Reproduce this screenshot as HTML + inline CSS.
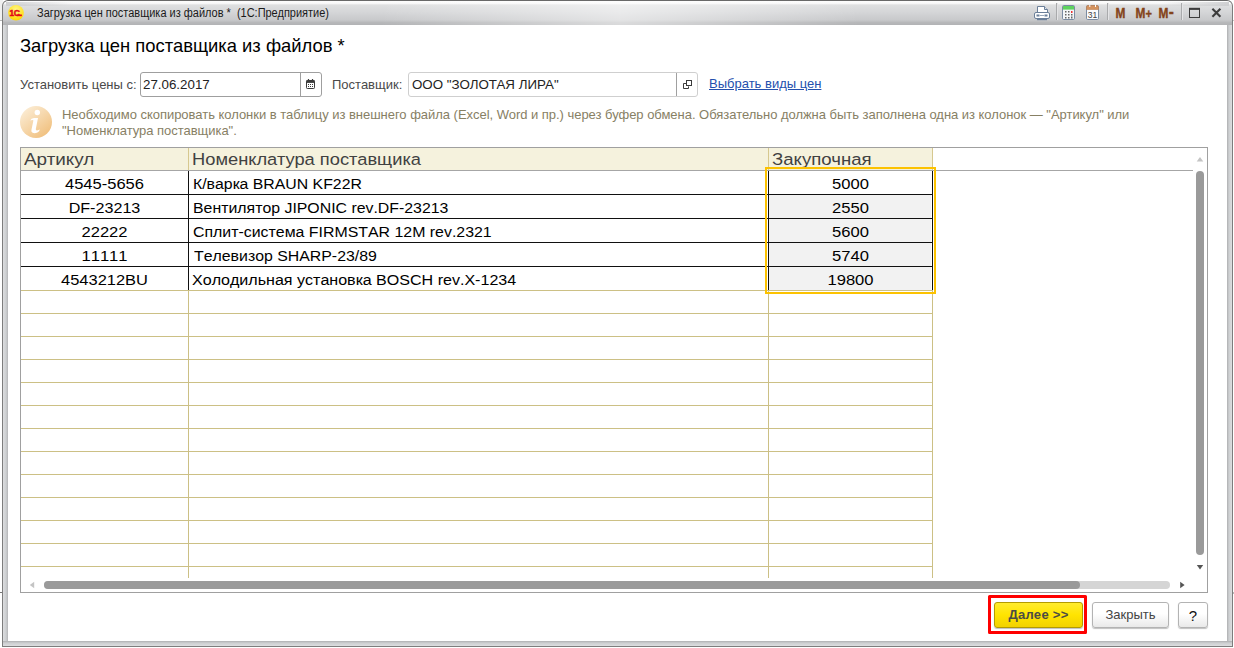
<!DOCTYPE html>
<html lang="ru">
<head>
<meta charset="utf-8">
<title>Загрузка цен поставщика из файлов</title>
<style>
html,body{margin:0;padding:0;background:#fff;}
body{width:1234px;height:648px;position:relative;overflow:hidden;font-family:"Liberation Sans",sans-serif;}
.abs{position:absolute;}
#bgl1{left:0;top:0;width:3px;height:20px;background:#f0f0f0;}
#bgl2{left:0;top:20px;width:3px;height:1px;background:#b4b4b4;}
#bgl3{left:0;top:592px;width:3px;height:1px;background:#777;}
#bgr1{left:1233px;top:20px;width:1px;height:1px;background:#c8c8c8;}
#bgr2{left:1233px;top:592px;width:1px;height:2px;background:#bbb;}
#win{left:2px;top:0;width:1231px;height:647px;box-sizing:border-box;border:1px solid #7d7d7d;border-top-color:#696969;border-radius:6px 6px 0 0;
 background:linear-gradient(to bottom,#fdfdfd 0px,#f9f9f9 2.4px,#e8e8e9 3.4px,#dedfe0 4.4px,#d5d6d8 11px,#c8c9cb 19px,#b7b8ba 21.5px,#b2b3b5 24px,#cbccce 25px);}
#winhl{left:380px;top:1px;width:480px;height:24px;background:linear-gradient(to right,rgba(255,255,255,0),rgba(255,255,255,.5) 50%,rgba(255,255,255,0));}
#wfl{left:6px;top:2px;width:67px;height:4px;background:linear-gradient(to right,rgba(205,206,208,.95),rgba(205,206,208,0));}
#wfr{left:1162px;top:2px;width:67px;height:4px;background:linear-gradient(to left,rgba(205,206,208,.95),rgba(205,206,208,0));}
#winl{left:3px;top:25px;width:5px;height:621px;background:linear-gradient(to right,#dcdddf,#cdcfd1 60%,#b4b5b7);}
#winr{left:1227px;top:25px;width:5px;height:621px;background:linear-gradient(to right,#aeafb1,#cdcfd1 40%,#dcdddf);}
#winb{left:3px;top:641px;width:1229px;height:5px;background:linear-gradient(to bottom,#aeafb1,#cdcfd1 40%,#dcdddf);}
#content{left:8px;top:25px;width:1219px;height:616px;background:#fff;}
#ttext{left:36.5px;top:6px;font-size:12.5px;line-height:15px;color:#1a1a1a;white-space:pre;transform-origin:0 0;transform:scaleX(0.878);}
#h1{left:20px;top:36px;font-size:18.4px;line-height:20px;color:#000;white-space:pre;}
.lbl{font-size:13px;line-height:16px;color:#4a4a4a;white-space:pre;}
.inp{box-sizing:border-box;height:25px;border:1px solid #a8a8a8;border-radius:3px;background:#fff;}
.inp .t{position:absolute;left:2px;top:4px;font-size:13.33px;line-height:16px;color:#222;white-space:pre;}
.inp .sep{position:absolute;top:0;bottom:0;width:1px;background:#b8b8b8;}
#info{left:62px;top:107px;font-size:13px;line-height:16px;color:#878064;white-space:pre;letter-spacing:-0.03px;}
#frame{left:20px;top:147px;width:1188px;height:446px;box-sizing:border-box;border:1px solid #a0a0a0;background:#fff;}
.hc{position:absolute;top:148px;height:22px;background:#f5f2dd;box-sizing:border-box;border-right:1px solid #d6c88f;}
.ht{position:absolute;top:150px;font-size:16.8px;line-height:20px;color:#414141;white-space:pre;transform-origin:0 50%;transform:scaleX(1.09);}
.cell{position:absolute;font-size:14px;line-height:18px;color:#000;white-space:pre;font-kerning:none;transform-origin:0 50%;transform:scaleX(1.14);}
.ctr{text-align:center;transform-origin:50% 50%;transform:scaleX(1.185);}
.txt{transform:scaleX(1.143);}
.hl{position:absolute;height:1px;}
.vl{position:absolute;width:1px;}
.btn{box-sizing:border-box;height:26px;border:1px solid #b3b3b3;border-radius:3px;background:linear-gradient(to bottom,#fff 0%,#fff 45%,#e9e9e9 100%);box-shadow:0 1px 1px rgba(0,0,0,.25);font-size:13px;line-height:24px;text-align:center;color:#444;white-space:pre;}
#ht1{transform:scaleX(1.125);}
#ht3{transform:scaleX(1.108);}
</style>
</head>
<body>
<div class="abs" id="bgl1"></div><div class="abs" id="bgl2"></div><div class="abs" id="bgl3"></div>
<div class="abs" id="bgr1"></div><div class="abs" id="bgr2"></div>
<div class="abs" id="win"></div><div class="abs" id="winhl"></div><div class="abs" id="wfl"></div><div class="abs" id="wfr"></div>
<div class="abs" id="winl"></div><div class="abs" id="winr"></div><div class="abs" id="winb"></div>
<div class="abs" id="content"></div>

<!-- title bar -->
<svg class="abs" style="left:8px;top:4px" width="18" height="18" viewBox="0 0 18 18">
 <defs><radialGradient id="g1c" cx="50%" cy="30%" r="70%"><stop offset="0" stop-color="#fff58a"/><stop offset="0.6" stop-color="#ffe633"/><stop offset="1" stop-color="#ffd400"/></radialGradient></defs>
 <circle cx="8" cy="8.8" r="7.8" fill="url(#g1c)"/>
 <text x="1.6" y="12.1" font-family="Liberation Sans, sans-serif" font-weight="bold" font-size="8.2" fill="#e20a17" stroke="#e20a17" stroke-width="0.5">1</text>
 <text x="5.7" y="12.1" font-family="Liberation Sans, sans-serif" font-weight="bold" font-size="8.6" fill="#e20a17" stroke="#e20a17" stroke-width="0.45">С</text>
 <rect x="9" y="10.5" width="4.9" height="1.7" fill="#e20a17"/>
</svg>
<div class="abs" id="ttext">Загрузка цен поставщика из файлов *  (1С:Предприятие)</div>

<!-- title bar icons -->
<svg class="abs" style="left:1030px;top:0" width="200" height="25" viewBox="1030 0 200 25">
 <!-- printer / preview -->
 <path d="M1037.5 13 V6.5 H1044.5 L1047.5 9.5 V13" fill="#fff" stroke="#6b7f99" stroke-width="1"/>
 <path d="M1044.5 6.5 V9.5 H1047.5" fill="#dfe6ee" stroke="#6b7f99" stroke-width="1"/>
 <rect x="1034.5" y="12.5" width="15" height="6" rx="1.5" fill="#fff" stroke="#6b7f99" stroke-width="1"/>
 <rect x="1036.5" y="14.5" width="3" height="2" fill="#6b7f99"/><rect x="1044.5" y="14.5" width="3" height="2" fill="#6b7f99"/>
 <rect x="1040" y="15" width="4" height="1" fill="#9aa9bb"/>
 <path d="M1037 19.5 H1047" stroke="#6b7f99" stroke-width="1.4"/>
 <!-- separators -->
 <rect x="1056" y="3" width="1" height="17" fill="#a9aaac"/><rect x="1057" y="3" width="1" height="17" fill="#e4e4e6"/>
 <rect x="1107" y="3" width="1" height="17" fill="#a9aaac"/><rect x="1108" y="3" width="1" height="17" fill="#e4e4e6"/>
 <rect x="1181" y="3" width="1" height="17" fill="#a9aaac"/><rect x="1182" y="3" width="1" height="17" fill="#e4e4e6"/>
 <!-- calculator -->
 <rect x="1062.5" y="5.5" width="12" height="14" rx="1.2" fill="#f4f6f8" stroke="#7b8ca3" stroke-width="1"/>
 <rect x="1063" y="6" width="11" height="3.6" fill="#5fd35f"/>
 <g fill="#666"><rect x="1065" y="11" width="1.5" height="1.5"/><rect x="1068" y="11" width="1.5" height="1.5"/>
 <rect x="1065" y="14" width="1.5" height="1.5"/><rect x="1068" y="14" width="1.5" height="1.5"/><rect x="1071" y="14" width="1.5" height="1.5"/>
 <rect x="1065" y="17" width="1.5" height="1.5"/><rect x="1068" y="17" width="1.5" height="1.5"/><rect x="1071" y="16.5" width="1.5" height="2"/></g>
 <rect x="1071" y="11" width="1.5" height="2" fill="#f03030"/>
 <!-- calendar -->
 <rect x="1086.5" y="5.5" width="12" height="14" rx="1.2" fill="#fbfbfc" stroke="#7b8ca3" stroke-width="1"/>
 <path d="M1086.5 9.5 V7 Q1086.5 5.5 1088 5.5 H1097 Q1098.5 5.5 1098.5 7 V9.5 Z" fill="#d4935f" stroke="#c08050" stroke-width="0.6"/>
 <rect x="1089.3" y="4.6" width="1" height="2.4" fill="#fff"/><rect x="1095" y="4.6" width="1" height="2.4" fill="#fff"/>
 <text x="1092.5" y="17.6" text-anchor="middle" font-family="Liberation Sans, sans-serif" font-size="8.6" fill="#444">31</text>
 <!-- M M+ M- -->
 <g font-family="Liberation Sans, sans-serif" font-weight="bold" font-size="14" fill="#84431a" stroke="#84431a" stroke-width="0.35">
  <text transform="translate(1115.4 18) scale(0.85 1)">M</text>
  <text transform="translate(1135.4 18) scale(0.85 1)">M<tspan dx="0.3" dy="-0.4" font-size="13">+</tspan></text>
  <text transform="translate(1158.4 18) scale(0.85 1)">M<tspan dx="0.6" dy="-1" font-size="17" textLength="6" lengthAdjust="spacingAndGlyphs">-</tspan></text>
 </g>
 <!-- maximize -->
 <rect x="1189.5" y="9" width="10" height="8.5" fill="none" stroke="#3c3c3c" stroke-width="1"/>
 <rect x="1189" y="7.8" width="11" height="2" fill="#3c3c3c"/>
 <!-- close -->
 <path d="M1212.4 8.8 L1220.4 16.8 M1220.4 8.8 L1212.4 16.8" stroke="#3c3c3c" stroke-width="2.1"/>
</svg>

<!-- header -->
<div class="abs" id="h1">Загрузка цен поставщика из файлов *</div>

<div class="abs lbl" style="left:20px;top:77px">Установить цены с:</div>
<div class="abs inp" style="left:140px;top:72px;width:182px;border-color:#9f9f9f"><span class="t">27.06.2017</span><span class="sep" style="left:159px;background:#9f9f9f"></span></div>
<div class="abs lbl" style="left:332px;top:77px">Поставщик:</div>
<div class="abs inp" style="left:408px;top:72px;width:290px;border-color:#cfcfcf"><span class="t" style="left:3px">ООО "ЗОЛОТАЯ ЛИРА"</span><span class="sep" style="left:267px;background:#a0a0a0"></span></div>
<div class="abs lbl" style="left:709px;top:76px;color:#2450ad;text-decoration:underline">Выбрать виды цен</div>

<svg class="abs" style="left:304px;top:77px" width="14" height="14" viewBox="304 77 14 14">
 <rect x="306.5" y="80.5" width="8" height="8" rx="0.8" fill="#fff" stroke="#3b3b3b" stroke-width="1"/>
 <rect x="306.5" y="80.3" width="8" height="2.6" fill="#3b3b3b"/>
 <rect x="307.9" y="79" width="1.2" height="2" fill="#3b3b3b"/><rect x="311.9" y="79" width="1.2" height="2" fill="#3b3b3b"/>
 <g fill="#3b3b3b"><rect x="308" y="84" width="1" height="1"/><rect x="310" y="84" width="1" height="1"/><rect x="312" y="84" width="1" height="1"/>
 <rect x="308" y="86" width="1" height="1"/><rect x="310" y="86" width="1" height="1"/><rect x="312" y="86" width="1" height="1"/></g>
</svg>
<svg class="abs" style="left:680px;top:77px" width="16" height="14" viewBox="680 77 16 14">
 <rect x="686.5" y="80.5" width="5" height="5" fill="none" stroke="#3b3b3b" stroke-width="1"/>
 <path d="M686 83.5 H683.5 V88.5 H688.5 V86.4" fill="none" stroke="#3b3b3b" stroke-width="1"/>
</svg>
<svg class="abs" style="left:20px;top:106px" width="32" height="32" viewBox="0 0 32 32">
 <defs><linearGradient id="gi" x1="0.15" y1="0.1" x2="0.85" y2="0.95"><stop offset="0" stop-color="#fbebd2"/><stop offset="1" stop-color="#f0bf7c"/></linearGradient></defs>
 <circle cx="16" cy="16" r="16" fill="url(#gi)"/>
 <circle cx="17.3" cy="6.5" r="2.7" fill="#fff"/>
 <path d="M10.2 14.4 Q11 12.4 14 12 H18 L15.8 23 Q15.6 24.6 17.2 24.4 L19.8 23.6 Q19.6 25.6 17.4 26.6 Q14.6 27.6 12.6 26.8 Q11 26 11.4 24 L13.4 14.6 Q13.2 13.6 10.2 14.4 Z" fill="#fff"/>
</svg>
<div class="abs" id="info">Необходимо скопировать колонки в таблицу из внешнего файла (Excel, Word и пр.) через буфер обмена. Обязательно должна быть заполнена одна из колонок — "Артикул" или
"Номенклатура поставщика".</div>

<!-- table -->
<div class="abs" id="frame"></div>
<div id="grid">
<div class="hc" style="left:21px;width:168px"></div>
<div class="hc" style="left:189px;width:580px"></div>
<div class="hc" style="left:769px;width:164px"></div>
<div class="ht" id="ht1" style="left:24px">Артикул</div>
<div class="ht" id="ht2" style="left:192px">Номенклатура поставщика</div>
<div class="ht" id="ht3" style="left:772px">Закупочная</div>
<div class="hl" style="left:21px;top:170px;width:1172px;background:#a6a6a6"></div>
<div class="hl" style="left:21px;top:290px;width:912px;background:#ccc085"></div>
<div class="hl" style="left:21px;top:313px;width:912px;background:#ccc085"></div>
<div class="hl" style="left:21px;top:336px;width:912px;background:#ccc085"></div>
<div class="hl" style="left:21px;top:359px;width:912px;background:#ccc085"></div>
<div class="hl" style="left:21px;top:382px;width:912px;background:#ccc085"></div>
<div class="hl" style="left:21px;top:405px;width:912px;background:#ccc085"></div>
<div class="hl" style="left:21px;top:428px;width:912px;background:#ccc085"></div>
<div class="hl" style="left:21px;top:451px;width:912px;background:#ccc085"></div>
<div class="hl" style="left:21px;top:474px;width:912px;background:#ccc085"></div>
<div class="hl" style="left:21px;top:497px;width:912px;background:#ccc085"></div>
<div class="hl" style="left:21px;top:520px;width:912px;background:#ccc085"></div>
<div class="hl" style="left:21px;top:543px;width:912px;background:#ccc085"></div>
<div class="hl" style="left:21px;top:566px;width:912px;background:#ccc085"></div>
<div class="vl" style="left:188px;top:290px;height:288px;background:#ccc085"></div>
<div class="vl" style="left:768px;top:290px;height:288px;background:#ccc085"></div>
<div class="vl" style="left:932px;top:290px;height:288px;background:#ccc085"></div>
<div class="abs" style="left:769px;top:195px;width:162px;height:95px;background:#f2f2f2"></div>
<div class="hl" style="left:21px;top:194px;width:912px;background:#111"></div>
<div class="hl" style="left:21px;top:218px;width:912px;background:#111"></div>
<div class="hl" style="left:21px;top:242px;width:912px;background:#111"></div>
<div class="hl" style="left:21px;top:266px;width:912px;background:#111"></div>
<div class="vl" style="left:188px;top:171px;height:119px;background:#111"></div>
<div class="vl" style="left:768px;top:171px;height:119px;background:#111"></div>
<div class="vl" style="left:932px;top:171px;height:119px;background:#111"></div>
<div class="cell ctr" style="left:21px;top:175px;width:167px;transform:scaleX(1.18)">4545-5656</div>
<div class="cell txt" style="left:193px;top:175px;transform:scaleX(1.131)">К/варка BRAUN KF22R</div>
<div class="cell ctr" style="left:769px;top:175px;width:163px">5000</div>
<div class="cell ctr" style="left:21px;top:199px;width:167px;transform:scaleX(1.152)">DF-23213</div>
<div class="cell txt" style="left:193px;top:199px;transform:scaleX(1.133)">Вентилятор JIPONIC rev.DF-23213</div>
<div class="cell ctr" style="left:769px;top:199px;width:163px">2550</div>
<div class="cell ctr" style="left:21px;top:223px;width:167px;transform:scaleX(1.185)">22222</div>
<div class="cell txt" style="left:193px;top:223px;transform:scaleX(1.135)">Сплит-система FIRMSTAR 12M rev.2321</div>
<div class="cell ctr" style="left:769px;top:223px;width:163px">5600</div>
<div class="cell ctr" style="left:21px;top:247px;width:167px;transform:scaleX(1.185)">11111</div>
<div class="cell txt" style="left:193.5px;top:247px;transform:scaleX(1.133)">Телевизор SHARP-23/89</div>
<div class="cell ctr" style="left:769px;top:247px;width:163px">5740</div>
<div class="cell ctr" style="left:21px;top:271px;width:167px;transform:scaleX(1.175)">4543212BU</div>
<div class="cell txt" style="left:192px;top:271px;transform:scaleX(1.147)">Холодильная установка BOSCH rev.X-1234</div>
<div class="cell ctr" style="left:769px;top:271px;width:163px">19800</div>
<div class="abs" style="left:765px;top:167px;width:171px;height:127px;box-sizing:border-box;border:2px solid #fcc200"></div>
<div class="abs" style="left:1196px;top:171px;width:8px;height:384px;border-radius:4px;background:#9a9a9a"></div>
<svg class="abs" style="left:1196px;top:156px" width="8" height="6" viewBox="0 0 8 6"><path d="M4 1 L7.3 5.4 H0.7 Z" fill="#c4c4c4"/></svg>
<svg class="abs" style="left:1196px;top:564px" width="8" height="6" viewBox="0 0 8 6"><path d="M0.8 1 H7.2 L4 5.4 Z" fill="#555"/></svg>
<div class="abs" style="left:44px;top:581px;width:1126px;height:8px;border-radius:4px;background:#d5d5d5"></div>
<div class="abs" style="left:44px;top:581px;width:1036px;height:8px;border-radius:4px;background:#9a9a9a"></div>
<svg class="abs" style="left:29px;top:581px" width="6" height="8" viewBox="0 0 6 8"><path d="M5.2 0.8 V7.2 L0.8 4 Z" fill="#c4c4c4"/></svg>
<svg class="abs" style="left:1179px;top:581px" width="6" height="8" viewBox="0 0 6 8"><path d="M1.2 0.8 V7.2 L5.6 4 Z" fill="#555"/></svg>
</div><!--/grid-->

<!-- buttons -->
<div class="abs" style="left:988px;top:595px;width:99px;height:39px;box-sizing:border-box;border:3px solid #fe0000;border-radius:1.5px;"></div>
<div class="abs btn" style="left:994px;top:602px;width:89px;border-color:#b39b00;background:linear-gradient(to bottom,#ffec2e 0%,#ffe400 50%,#f2d200 100%);font-weight:bold;color:#4b4b45;letter-spacing:0.3px;">Далее &gt;&gt;</div>
<div class="abs btn" style="left:1092px;top:602px;width:77px;">Закрыть</div>
<div class="abs btn" style="left:1178px;top:602px;width:30px;font-size:15px;line-height:26px;color:#111;">?</div>
</body>
</html>
